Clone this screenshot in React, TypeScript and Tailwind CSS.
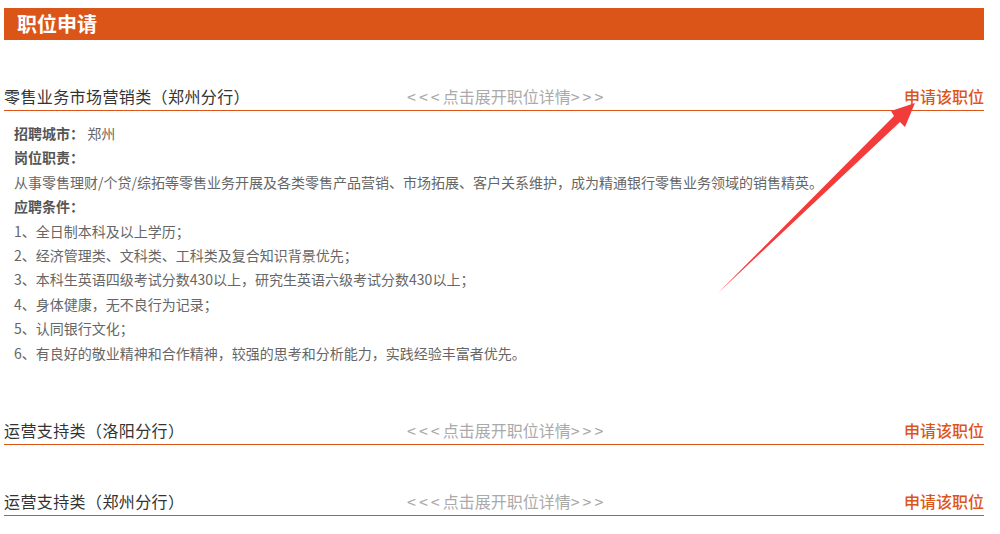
import React from 'react';

const jobs = [
  { title: '零售业务市场营销类（郑州分行）', open: true },
  { title: '运营支持类（洛阳分行）', open: false },
  { title: '运营支持类（郑州分行）', open: false },
];

const requirements = [
  '1、全日制本科及以上学历；',
  '2、经济管理类、文科类、工科类及复合知识背景优先；',
  '3、本科生英语四级考试分数430以上，研究生英语六级考试分数430以上；',
  '4、身体健康，无不良行为记录；',
  '5、认同银行文化；',
  '6、有良好的敬业精神和合作精神，较强的思考和分析能力，实践经验丰富者优先。',
];

const JobRow: React.FC<{ title: string }> = ({ title }) => (
  <div className="mt-[44px] flex items-center pb-[2px] leading-[24px] border-b border-[#dc5518]">
    <span className="w-[403px] text-[16px] tracking-[0.4px] text-[#333]">{title}</span>
    <span className="text-[16px] text-[#aaa] cursor-pointer">
      <span className="tracking-[3px]">&lt;&lt;&lt;</span>点击展开职位详情<span className="tracking-[3px]">&gt;&gt;&gt;</span>
    </span>
    <span className="ml-auto text-[16px] font-medium text-[#dc5518] cursor-pointer">申请该职位</span>
  </div>
);

const JobDetail: React.FC = () => (
  <div className="pt-[10px] pb-[9px] pl-[10px] text-[14px] leading-[24.4px] text-[#666]">
    <p>
      <b className="text-[#555]">招聘城市：</b> 郑州
    </p>
    <p className="font-bold text-[#555]">岗位职责：</p>
    <p>从事零售理财/个贷/综拓等零售业务开展及各类零售产品营销、市场拓展、客户关系维护，成为精通银行零售业务领域的销售精英。</p>
    <p className="font-bold text-[#555]">应聘条件：</p>
    {requirements.map(r => (
      <p key={r}>{r}</p>
    ))}
  </div>
);

export default function App() {
  return (
    <div
      className="relative w-[1000px] h-[534px] bg-white overflow-hidden"
      style={{ fontFamily: '"Noto Sans CJK SC", "Noto Sans", sans-serif' }}
    >
      <div className="ml-1 mt-2 w-[980px]">
        {/* 标题栏 */}
        <div className="h-8 bg-[#dc5518] pl-[13px] flex items-center">
          <h2 className="text-[20px] font-bold text-white leading-none">职位申请</h2>
        </div>

        {jobs.map(job => (
          <div key={job.title}>
            <JobRow title={job.title} />
            {job.open && <JobDetail />}
          </div>
        ))}
      </div>

      {/* 红色箭头标注 */}
      <svg className="absolute left-0 top-0 pointer-events-none" width="1000" height="534">
        <polygon
          points="718,293 894,116 891,111 915,103 905,127 900,122"
          fill="#f23c3c"
        />
      </svg>
    </div>
  );
}
